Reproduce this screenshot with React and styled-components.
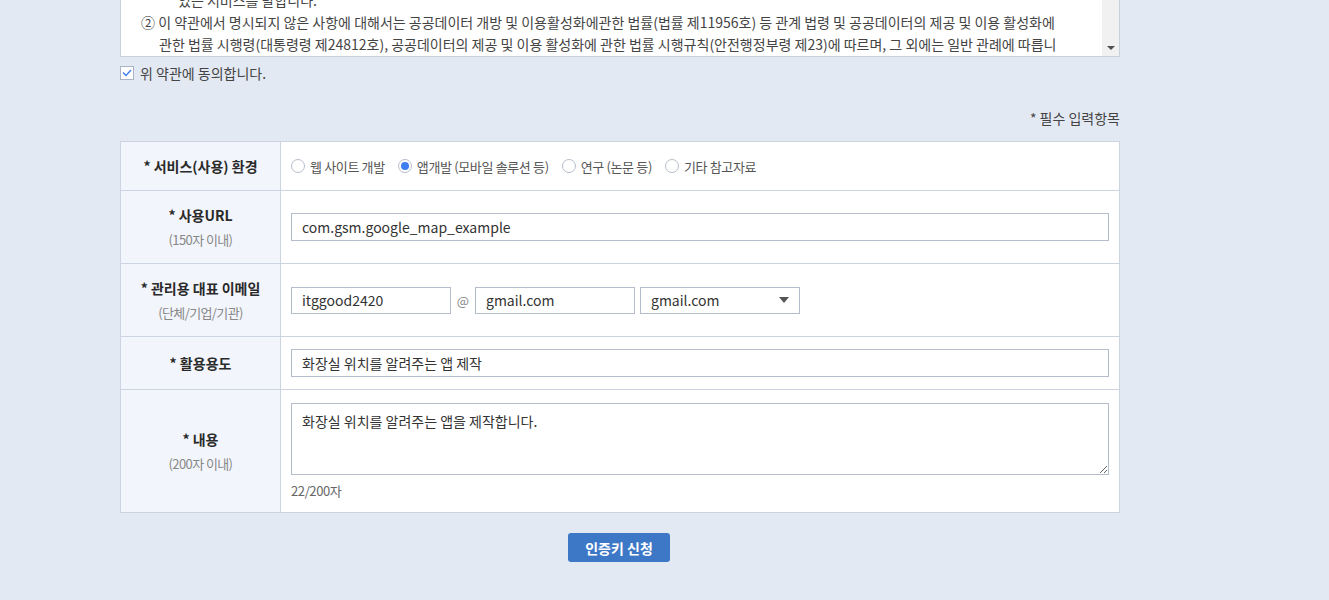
import React from "react";
import styled, { createGlobalStyle } from "styled-components";

const GlobalStyle = createGlobalStyle`
  html, body {
    margin: 0;
    padding: 0;
    background: #e3e9f3;
    font-family: "Noto Sans CJK KR", "Noto Sans", sans-serif;
    color: #333;
    overflow: hidden;
  }
  * { box-sizing: border-box; }
`

const Page = styled.div`
  width: 1000px;
  margin: 0 0 0 120px;
  display: flex;
  flex-direction: column;
`

const TermsBox = styled.div`
  margin-top: -64px;
  height: 121px;
  display: flex;
  background: #fff;
  border: 1px solid #c9d0de;
`

const TermsText = styled.div`
  flex: 1;
  padding-top: 52px;
  font-size: 14px;
  line-height: 22px;
  color: #444;
  overflow: hidden;
`

const TermsLine = styled.div`
  white-space: nowrap;
  padding-left: ${(p) => p.indent}px;
`

const FakeScroll = styled.div`
  width: 17px;
  background: #f1f1f1;
  display: flex;
  flex-direction: column;
  justify-content: flex-end;
  align-items: center;
  padding-bottom: 6px;
`

const ScrollArrow = styled.div`
  width: 0;
  height: 0;
  border-left: 4px solid transparent;
  border-right: 4px solid transparent;
  border-top: 4px solid #505050;
`

const AgreeRow = styled.label`
  display: flex;
  align-items: center;
  gap: 6px;
  margin-top: 8px;
  font-size: 14px;
  color: #444;
  line-height: 16px;
`

const CheckBox = styled.span`
  width: 14px;
  height: 14px;
  background: #fff;
  border: 1px solid #aab3c5;
  display: flex;
  align-items: center;
  justify-content: center;
`

const RequiredNote = styled.div`
  text-align: right;
  font-size: 14px;
  color: #444;
  margin-top: 29px;
  line-height: 16px;
`

const FormTable = styled.table`
  margin-top: 15px;
  width: 1000px;
  border-collapse: collapse;
  background: #fff;
  table-layout: fixed;
`

const LabelCell = styled.th`
  width: 160px;
  height: ${(p) => p.h}px;
  background: #f2f5fb;
  border: 1px solid #ccd3e1;
  font-weight: 600;
  font-size: 14px;
  color: #2a2a2a;
  text-align: center;
  vertical-align: middle;
  padding: 0;
`

const LabelTitle = styled.div`
  line-height: 20px;
`

const LabelSub = styled.div`
  font-size: 13px;
  font-weight: 400;
  color: #888;
  line-height: 18px;
  margin-top: 6px;
  letter-spacing: -0.6px;
`

const ValueCell = styled.td`
  border: 1px solid #ccd3e1;
  padding: 0 10px;
  vertical-align: middle;
`

const RadioGroup = styled.div`
  display: flex;
  align-items: center;
  gap: 13px;
`

const RadioItem = styled.label`
  display: flex;
  align-items: center;
  gap: 5px;
  font-size: 13px;
  color: #555;
  letter-spacing: -0.35px;
`

const RadioCircle = styled.span`
  width: 14px;
  height: 14px;
  border-radius: 50%;
  border: 1px solid #b6bdcb;
  background: #fff;
  display: flex;
  align-items: center;
  justify-content: center;
  &::after {
    content: "";
    width: 8px;
    height: 8px;
    border-radius: 50%;
    background: ${(p) => (p.checked ? "#3f7ef0" : "transparent")};
  }
`

const TextInput = styled.input`
  width: ${(p) => p.w || "100%"};
  height: ${(p) => p.h || 28}px;
  border: 1px solid #b5bdcc;
  padding: 0 10px;
  font-family: inherit;
  font-size: 14px;
  color: #333;
  outline: none;
  background: #fff;
`

const EmailRow = styled.div`
  display: flex;
  align-items: center;
`

const At = styled.span`
  font-size: 13px;
  color: #888;
  width: 24px;
  text-align: center;
`

const SelectBox = styled.div`
  margin-left: 5px;
  width: 160px;
  height: 27px;
  border: 1px solid #b5bdcc;
  display: flex;
  align-items: center;
  justify-content: space-between;
  padding: 0 10px;
  font-size: 14px;
  color: #333;
  background: #fff;
`

const SelectArrow = styled.span`
  width: 0;
  height: 0;
  border-left: 5px solid transparent;
  border-right: 5px solid transparent;
  border-top: 6px solid #555;
`

const TextArea = styled.textarea`
  display: block;
  width: 100%;
  height: 72px;
  margin-top: 0;
  border: 1px solid #b5bdcc;
  padding: 7px 10px;
  font-family: inherit;
  font-size: 14px;
  line-height: 20px;
  color: #333;
  outline: none;
`

const Counter = styled.div`
  font-size: 13px;
  color: #666;
  margin-top: 7px;
  line-height: 18px;
  letter-spacing: -0.4px;
`

const ButtonRow = styled.div`
  display: flex;
  justify-content: center;
  margin-top: 20px;
`

const SubmitButton = styled.button`
  width: 102px;
  height: 29px;
  margin-left: -2px;
  border: none;
  border-radius: 3px;
  background: #3d78c7;
  color: #fff;
  font-family: inherit;
  font-weight: 700;
  font-size: 14px;
  cursor: pointer;
`

const radios = [
  { label: "웹 사이트 개발", checked: false },
  { label: "앱개발 (모바일 솔루션 등)", checked: true },
  { label: "연구 (논문 등)", checked: false },
  { label: "기타 참고자료", checked: false },
]

export default function App() {
  return (
    <>
      <GlobalStyle />
      <Page>
        <TermsBox>
          <TermsText>
            <TermsLine indent={57}>있는 서비스를 말합니다.</TermsLine>
            <TermsLine indent={20}>② 이 약관에서 명시되지 않은 사항에 대해서는 공공데이터 개방 및 이용활성화에관한 법률(법률 제11956호) 등 관계 법령 및 공공데이터의 제공 및 이용 활성화에</TermsLine>
            <TermsLine indent={38}>관한 법률 시행령(대통령령 제24812호), 공공데이터의 제공 및 이용 활성화에 관한 법률 시행규칙(안전행정부령 제23)에 따르며, 그 외에는 일반 관례에 따릅니</TermsLine>
          </TermsText>
          <FakeScroll>
            <ScrollArrow />
          </FakeScroll>
        </TermsBox>

        <AgreeRow>
          <CheckBox>
            <svg width="10" height="8" viewBox="0 0 10 8">
              <path d="M1 3.5 L4 6.5 L9 1" fill="none" stroke="#3f7ef0" strokeWidth="1.4" />
            </svg>
          </CheckBox>
          위 약관에 동의합니다.
        </AgreeRow>

        <RequiredNote>* 필수 입력항목</RequiredNote>

        <FormTable>
          <tbody>
            <tr>
              <LabelCell h={49}>
                <LabelTitle>* 서비스(사용) 환경</LabelTitle>
              </LabelCell>
              <ValueCell>
                <RadioGroup>
                  {radios.map((r) => (
                    <RadioItem key={r.label}>
                      <RadioCircle checked={r.checked} />
                      {r.label}
                    </RadioItem>
                  ))}
                </RadioGroup>
              </ValueCell>
            </tr>
            <tr>
              <LabelCell h={73}>
                <LabelTitle>* 사용URL</LabelTitle>
                <LabelSub>(150자 이내)</LabelSub>
              </LabelCell>
              <ValueCell>
                <TextInput defaultValue="com.gsm.google_map_example" />
              </ValueCell>
            </tr>
            <tr>
              <LabelCell h={73}>
                <LabelTitle>* 관리용 대표 이메일</LabelTitle>
                <LabelSub>(단체/기업/기관)</LabelSub>
              </LabelCell>
              <ValueCell>
                <EmailRow>
                  <TextInput w="160px" h={27} defaultValue="itggood2420" />
                  <At>@</At>
                  <TextInput w="160px" h={27} defaultValue="gmail.com" />
                  <SelectBox>
                    gmail.com
                    <SelectArrow />
                  </SelectBox>
                </EmailRow>
              </ValueCell>
            </tr>
            <tr>
              <LabelCell h={53}>
                <LabelTitle>* 활용용도</LabelTitle>
              </LabelCell>
              <ValueCell>
                <TextInput defaultValue="화장실 위치를 알려주는 앱 제작" />
              </ValueCell>
            </tr>
            <tr>
              <LabelCell h={123}>
                <LabelTitle>* 내용</LabelTitle>
                <LabelSub>(200자 이내)</LabelSub>
              </LabelCell>
              <ValueCell>
                <TextArea defaultValue="화장실 위치를 알려주는 앱을 제작합니다." />
                <Counter>22/200자</Counter>
              </ValueCell>
            </tr>
          </tbody>
        </FormTable>

        <ButtonRow>
          <SubmitButton>인증키 신청</SubmitButton>
        </ButtonRow>
      </Page>
    </>
  );
}
